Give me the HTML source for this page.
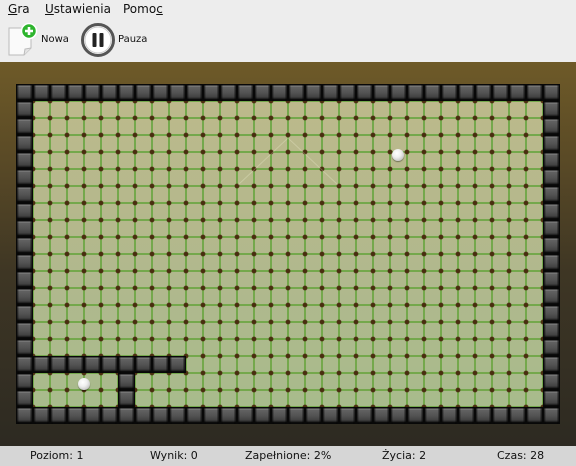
<!DOCTYPE html>
<html><head><meta charset="utf-8"><style>
*{margin:0;padding:0;box-sizing:border-box}
body{width:576px;height:466px;overflow:hidden;background:#ededed;font-family:"DejaVu Sans","Liberation Sans",sans-serif;position:relative}
.menu{position:absolute;top:0;left:0;width:576px;height:20px;font-size:12px;color:#111}
.menu span{position:absolute;top:2px}
.tb{position:absolute;top:20px;left:0;width:576px;height:42px}
.tb .lbl{position:absolute;font-size:10px;color:#111;top:14px}
.game{position:absolute;left:0;top:62px;width:576px;height:384px;background:linear-gradient(180deg,#6e5a28 0%,#5a4a26 25%,#3e3624 55%,#2d2a22 100%)}
.field{position:absolute;left:33px;top:101px;width:510px;height:306px;
background:
radial-gradient(circle at 8.5px 8.5px,#4a2e10 0,#4a2e10 2px,transparent 2.8px) -8.5px -8.5px/17px 17px,
linear-gradient(90deg,#74a84c 0 1px,transparent 1px 16px,#74a84c 16px 17px) 0 0/17px 17px,
linear-gradient(180deg,#74a84c 0 1px,transparent 1px 16px,#74a84c 16px 17px) 0 0/17px 17px,
linear-gradient(180deg,#bcb98b,#b0b88d 60%,#a8bb8c);}
.w{position:absolute;background:
linear-gradient(90deg,#080808 0 1.5px,rgba(0,0,0,.2) 1.5px 3px,transparent 3px 14px,rgba(0,0,0,.3) 14px 15.5px,#080808 15.5px 17px) 0 0/17px 17px,
linear-gradient(180deg,#080808 0 1.5px,#888 1.5px 2.5px,#636363 2.5px,#525252 9px,#424242 13px,#1a1a1a 15px,#080808 15.5px 17px) 0 0/17px 17px;}
.ball{position:absolute;width:12px;height:12px;border-radius:50%;background:radial-gradient(circle at 40% 35%,#fff 0,#eee 40%,#aaa 100%);box-shadow:0 1px 1px rgba(0,0,0,.4)}
.status{position:absolute;top:446px;left:0;width:576px;height:20px;background:#d6d6d6;font-size:11px;color:#111}
.status span{position:absolute;top:3px}
u{text-decoration:underline}
</style></head><body>
<div class="menu"><span style="left:8px"><u>G</u>ra</span><span style="left:45px"><u>U</u>stawienia</span><span style="left:123px">Pomo<u>c</u></span></div>
<div class="tb">
<svg style="position:absolute;left:6px;top:2px" width="32" height="36" viewBox="0 0 32 36">
<path d="M3 6 H25 V26 L18 33 H3 Z" fill="#fafafa" stroke="#bbb"/>
<path d="M18 33 L19 27 L25 26" fill="#e4e4e4" stroke="#bbb"/>
<circle cx="23" cy="9" r="7.5" fill="#2db42d" stroke="#fff" stroke-width="1.5"/>
<path d="M23 5 V13 M19 9 H27" stroke="#fff" stroke-width="2.6"/>
</svg>
<span class="lbl" style="left:41px">Nowa</span>
<svg style="position:absolute;left:81px;top:3px" width="34" height="34" viewBox="0 0 34 34">
<circle cx="17" cy="17" r="15.5" fill="#fff" stroke="#555" stroke-width="3"/>
<circle cx="17" cy="17" r="13" fill="none" stroke="#ccc" stroke-width="1"/>
<rect x="11.5" y="10" width="4" height="14" rx="1" fill="#222"/>
<rect x="18.5" y="10" width="4" height="14" rx="1" fill="#222"/>
</svg>
<span class="lbl" style="left:118px">Pauza</span>
</div>
<div class="game"></div>
<div class="field"></div>
<svg style="position:absolute;left:33px;top:101px" width="510" height="306"><path d="M205 84 L255 37 L305 84" fill="none" stroke="rgba(255,255,230,.25)" stroke-width="1"/></svg>
<div class="w" style="left:16px;top:84px;width:544px;height:17px"></div>
<div class="w" style="left:16px;top:407px;width:544px;height:17px"></div>
<div class="w" style="left:16px;top:101px;width:17px;height:306px"></div>
<div class="w" style="left:543px;top:101px;width:17px;height:306px"></div>
<div class="w" style="left:33px;top:356px;width:153px;height:17px"></div>
<div class="w" style="left:118px;top:373px;width:17px;height:34px"></div>
<div class="ball" style="left:78px;top:378px"></div>
<div class="ball" style="left:392px;top:149px"></div>
<div class="status"><span style="left:30px">Poziom: 1</span><span style="left:150px">Wynik: 0</span><span style="left:245px">Zapełnione: 2%</span><span style="left:382px">Życia: 2</span><span style="left:497px">Czas: 28</span></div>
</body></html>
